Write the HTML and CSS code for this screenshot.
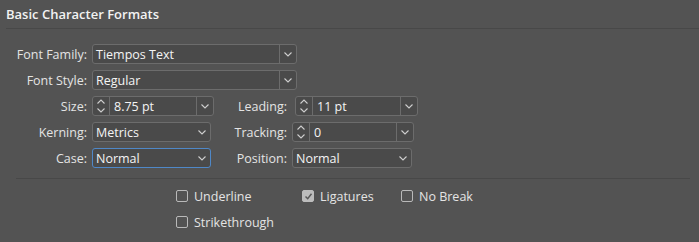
FILE: index.html
```html
<!DOCTYPE html>
<html>

<head>
  <link rel="stylesheet" href="styles.css">
</head>

<body>
  <div class="panel">
    <div class="title">Basic Character Formats</div>

    <div class="form">
      <label class="lbl">Font Family:</label>
      <div class="field wide">
        <span class="value">Tiempos Text</span>
        <span class="drop"><svg width="8" height="5" viewBox="0 0 8 5"><polyline points="0.5,0.5 4,4 7.5,0.5" /></svg></span>
      </div>

      <label class="lbl">Font Style:</label>
      <div class="field wide">
        <span class="value">Regular</span>
        <span class="drop"><svg width="8" height="5" viewBox="0 0 8 5"><polyline points="0.5,0.5 4,4 7.5,0.5" /></svg></span>
      </div>

      <label class="lbl">Size:</label>
      <div class="field">
        <span class="spin"><svg width="8" height="14" viewBox="0 0 8 14"><polyline points="0.5,4.5 4,1 7.5,4.5" /><polyline points="0.5,9.5 4,13 7.5,9.5" /></svg></span>
        <span class="value">8.75 pt</span>
        <span class="drop"><svg width="8" height="5" viewBox="0 0 8 5"><polyline points="0.5,0.5 4,4 7.5,0.5" /></svg></span>
      </div>
      <label class="lbl">Leading:</label>
      <div class="field lead">
        <span class="spin"><svg width="8" height="14" viewBox="0 0 8 14"><polyline points="0.5,4.5 4,1 7.5,4.5" /><polyline points="0.5,9.5 4,13 7.5,9.5" /></svg></span>
        <span class="value">11 pt</span>
        <span class="drop"><svg width="8" height="5" viewBox="0 0 8 5"><polyline points="0.5,0.5 4,4 7.5,0.5" /></svg></span>
      </div>

      <label class="lbl">Kerning:</label>
      <div class="field short">
        <span class="value">Metrics</span>
        <span class="chev"><svg width="8" height="5" viewBox="0 0 8 5"><polyline points="0.5,0.5 4,4 7.5,0.5" /></svg></span>
      </div>
      <label class="lbl">Tracking:</label>
      <div class="field">
        <span class="spin"><svg width="8" height="14" viewBox="0 0 8 14"><polyline points="0.5,4.5 4,1 7.5,4.5" /><polyline points="0.5,9.5 4,13 7.5,9.5" /></svg></span>
        <span class="value">0</span>
        <span class="drop"><svg width="8" height="5" viewBox="0 0 8 5"><polyline points="0.5,0.5 4,4 7.5,0.5" /></svg></span>
      </div>

      <label class="lbl">Case:</label>
      <div class="field short focus">
        <span class="value">Normal</span>
        <span class="chev"><svg width="8" height="5" viewBox="0 0 8 5"><polyline points="0.5,0.5 4,4 7.5,0.5" /></svg></span>
      </div>
      <label class="lbl">Position:</label>
      <div class="field pos">
        <span class="value">Normal</span>
        <span class="chev"><svg width="8" height="5" viewBox="0 0 8 5"><polyline points="0.5,0.5 4,4 7.5,0.5" /></svg></span>
      </div>
    </div>

    <div class="divider"></div>

    <div class="checks">
      <label class="check"><span class="box"></span>Underline</label>
      <label class="check"><span class="box on"><svg width="9" height="9" viewBox="0 0 9 9"><polyline points="1.5,4.5 3.7,6.7 7.5,1.8" /></svg></span>Ligatures</label>
      <label class="check"><span class="box"></span>No Break</label>
      <label class="check"><span class="box"></span>Strikethrough</label>
    </div>
  </div>
</body>

</html>
```

FILE: styles.css
```css
* {
  margin: 0;
  padding: 0;
  box-sizing: border-box;
}

body {
  background-color: #535353;
  font-family: "Open Sans", "Liberation Sans", sans-serif;
  font-size: 12.5px;
  color: #e4e4e4;
}

.panel {
  width: 699px;
  height: 242px;
}

.title {
  height: 29px;
  margin-left: 6px;
  padding-top: 5px;
  font-size: 13px;
  font-weight: 600;
  color: #f2f2f2;
  border-bottom: 1px solid #484848;
}

.form {
  display: grid;
  grid-template-columns: 87px 122px 68px 122px;
  grid-auto-rows: 20px;
  column-gap: 5px;
  row-gap: 6px;
  margin-top: 15px;
}

.lbl {
  display: flex;
  align-items: center;
  justify-content: flex-end;
  white-space: nowrap;
}

.field {
  display: flex;
  align-items: stretch;
  height: 20px;
  border: 1px solid #6c6c6c;
  border-radius: 3px;
  background-color: #4a4a4a;
  color: #f4f4f4;
}

.field.wide {
  grid-column: 2 / -1;
  justify-self: start;
  width: 205px;
}

.field.short {
  width: 119px;
}

.field.pos {
  width: 120px;
}

.field.lead {
  margin-left: 3px;
  width: 123px;
}

.field.focus {
  border-color: #4f88c8;
}

.value {
  flex: 1;
  display: flex;
  align-items: center;
  padding-left: 3px;
  white-space: nowrap;
}

.spin + .value {
  padding-left: 4px;
}

.drop,
.spin,
.chev {
  display: flex;
  align-items: center;
  justify-content: center;
  width: 17px;
}

.drop {
  border-left: 1px solid #6c6c6c;
}

.spin {
  border-right: 1px solid #6c6c6c;
}

.chev {
  width: 16px;
}

svg polyline {
  fill: none;
  stroke: #cfcfcf;
  stroke-width: 1.1;
}

.divider {
  margin: 10px 9px 0 16px;
  border-top: 1px solid #484848;
}

.checks {
  display: grid;
  grid-template-columns: 126px 99px auto;
  grid-auto-rows: 16px;
  row-gap: 10px;
  margin: 9px 0 0 176px;
}

.check {
  display: flex;
  align-items: center;
  gap: 6px;
  white-space: nowrap;
}

.box {
  display: flex;
  align-items: center;
  justify-content: center;
  width: 12px;
  height: 12px;
  border: 1px solid #b9b9b9;
  border-radius: 2px;
}

.box.on {
  background-color: #bdbdbd;
  border-color: #bdbdbd;
}

.box.on polyline {
  stroke: #5a5a5a;
  stroke-width: 1.5;
}
```
